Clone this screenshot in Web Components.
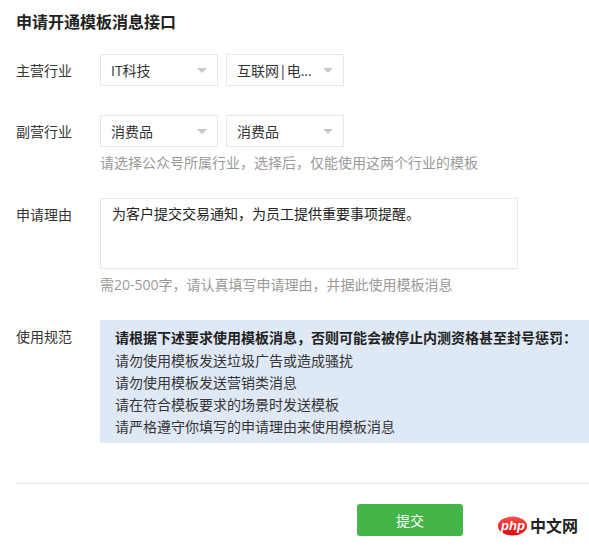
<!DOCTYPE html>
<html lang="zh">
<head>
<meta charset="utf-8">
<style>
  html, body { margin: 0; padding: 0; background: #fff; }
  body { font-family: "Open Sans", "Noto Sans CJK SC", "Liberation Sans", sans-serif; font-size: 14px; color: #353535; }
</style>
</head>
<body>
<apply-page>
  <span slot="title">申请开通模板消息接口</span>

  <form-row label="主营行业" style="height:32px;margin-top:21px">
    <drop-select>IT科技</drop-select>
    <drop-select>互联网|电...</drop-select>
  </form-row>

  <form-row label="副营行业" style="margin-top:29px" hint="请选择公众号所属行业，选择后，仅能使用这两个行业的模板">
    <drop-select>消费品</drop-select>
    <drop-select>消费品</drop-select>
  </form-row>

  <form-row label="申请理由" style="margin-top:26px" hint="需20-500字，请认真填写申请理由，并据此使用模板消息">
    <reason-box>为客户提交交易通知，为员工提供重要事项提醒。</reason-box>
  </form-row>

  <form-row label="使用规范" style="margin-top:26px">
    <rule-box>
      <b slot="head">请根据下述要求使用模板消息，否则可能会被停止内测资格甚至封号惩罚：</b>
      <div>请勿使用模板发送垃圾广告或造成骚扰</div>
      <div>请勿使用模板发送营销类消息</div>
      <div>请在符合模板要求的场景时发送模板</div>
      <div>请严格遵守你填写的申请理由来使用模板消息</div>
    </rule-box>
  </form-row>

  <submit-bar slot="foot">提交</submit-bar>
</apply-page>

<script>
class ApplyPage extends HTMLElement {
  constructor() {
    super();
    this.attachShadow({mode: 'open'}).innerHTML = `<style>
      :host { display: block; padding: 11px 0 0 16px; }
      h1 { margin: 0; font-size: 16px; line-height: 22px; font-weight: 700; color: #222; }
    </style>
    <h1><slot name="title"></slot></h1>
    <slot></slot>
    <slot name="foot"></slot>`;
  }
}

class FormRow extends HTMLElement {
  constructor() {
    super();
    this.attachShadow({mode: 'open'}).innerHTML = `<style>
      :host { display: flex; }
      .label { width: 84px; flex: none; line-height: 34px; color: #353535; }
      .ctl { display: flex; gap: 8px; }
      .hint { color: #9a9a9a; line-height: 20px; margin-top: 6px; height: 19px; white-space: nowrap; }
      .hint:empty { display: none; }
    </style>
    <div class="label"></div>
    <div><div class="ctl"><slot></slot></div><div class="hint"></div></div>`;
  }
  connectedCallback() {
    this.shadowRoot.querySelector('.label').textContent = this.getAttribute('label');
    this.shadowRoot.querySelector('.hint').textContent = this.getAttribute('hint') || '';
  }
}

class DropSelect extends HTMLElement {
  constructor() {
    super();
    this.attachShadow({mode: 'open'}).innerHTML = `<style>
      :host { display: flex; align-items: center; justify-content: space-between; box-sizing: border-box;
              width: 118px; height: 32px; padding: 0 10px 0 10px; border: 1px solid #e7e7eb; color: #353535; line-height: 28px; white-space: nowrap; }
      span { padding-top: 2px; }
      i { width: 0; height: 0; border: 5px solid transparent; border-top: 5px solid #c6c6cc; border-bottom: 0; flex: none; }
    </style><span><slot></slot></span><i></i>`;
  }
}

class ReasonBox extends HTMLElement {
  constructor() {
    super();
    this.attachShadow({mode: 'open'}).innerHTML = `<style>
      :host { display: block; box-sizing: border-box; width: 418px; height: 71px; padding: 4px 11px; border: 1px solid #e7e7eb; line-height: 22px; color: #222; }
    </style><slot></slot>`;
  }
}

class RuleBox extends HTMLElement {
  constructor() {
    super();
    this.attachShadow({mode: 'open'}).innerHTML = `<style>
      :host { display: block; box-sizing: border-box; width: 489px; height: 123px; padding: 6px 15px; background: #dfe8f5; line-height: 22px; color: #353535; white-space: nowrap; }
      ::slotted(b) { display: block; font-weight: 700; color: #222; line-height: 24px; }
    </style><slot name="head"></slot><slot></slot>`;
  }
}

class SubmitBar extends HTMLElement {
  constructor() {
    super();
    this.attachShadow({mode: 'open'}).innerHTML = `<style>
      :host { display: block; margin-top: 40px; border-top: 1px solid #e7e7eb; position: relative; height: 62px; }
      .row { display: flex; justify-content: flex-start; padding: 20px 0 0 341px; }
      button { width: 106px; height: 32px; border: 0; border-radius: 3px; background: #44b549; color: #fff; font: inherit; padding: 0; }
      .mark { position: absolute; left: 482px; top: 32px; display: flex; align-items: center; gap: 3px; }
      .mark span { font-size: 16px; line-height: 20px; font-weight: 700; color: #222; }
      svg { display: block; }
      text { font-family: "Liberation Sans", sans-serif; font-size: 13px; font-weight: 700; font-style: italic; fill: #fff; }
    </style>
    <div class="row"><button><slot></slot></button></div>
    <div class="mark">
      <svg width="29" height="20" viewBox="0 0 29 20">
        <defs><linearGradient id="g" x1="0" y1="0" x2="0" y2="1"><stop offset="0" stop-color="#f4504c"/><stop offset="1" stop-color="#e2090c"/></linearGradient></defs>
        <ellipse cx="14.5" cy="10" rx="14.5" ry="9.5" fill="url(#g)"/>
        <text x="3" y="13.5">php</text>
      </svg>
      <span>中文网</span>
    </div>`;
  }
}

customElements.define('apply-page', ApplyPage);
customElements.define('form-row', FormRow);
customElements.define('drop-select', DropSelect);
customElements.define('reason-box', ReasonBox);
customElements.define('rule-box', RuleBox);
customElements.define('submit-bar', SubmitBar);
</script>
</body>
</html>
